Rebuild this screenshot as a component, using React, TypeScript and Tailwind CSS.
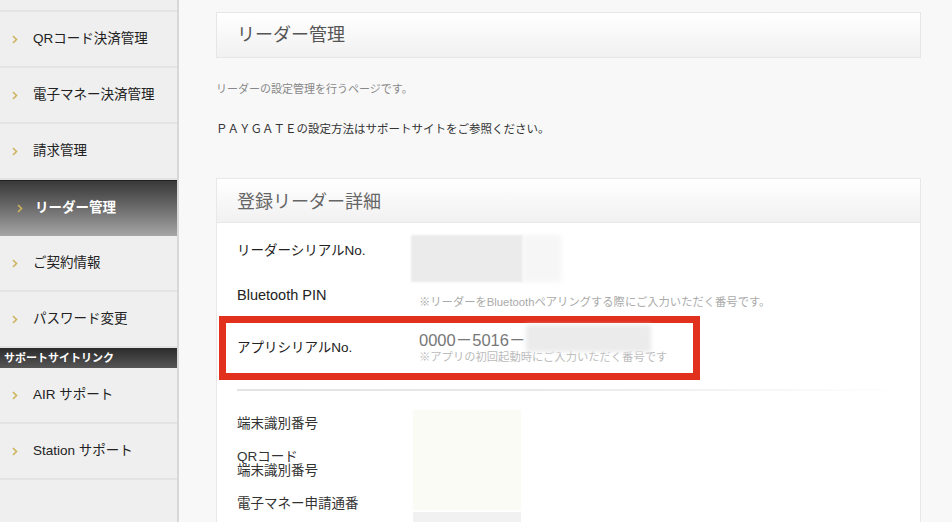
import React from 'react'

const font = { fontFamily: '"Liberation Sans", "Noto Sans CJK JP", sans-serif' }

const Chevron = () => (
  <svg width="6" height="9" viewBox="0 0 6 9" className="shrink-0">
    <path d="M1 1 L4.5 4.5 L1 8" fill="none" stroke="#cdb35c" strokeWidth="1.6" />
  </svg>
)

const NavItem = ({ label, active = false }: { label: string; active?: boolean }) =>
  active ? (
    <div className="h-[56px] flex items-center pl-[17px] gap-[12px] bg-gradient-to-b from-[#393939] to-[#a6a6a6] border-t border-[#222]">
      <Chevron />
      <span className="text-[13.5px] text-white font-bold">{label}</span>
    </div>
  ) : (
    <div className="h-[56px] flex items-center pl-[12px] gap-[15px] border-b-2 border-[#e3e3e3]">
      <Chevron />
      <span className="text-[13.5px] text-[#222]">{label}</span>
    </div>
  )

export default function App() {
  return (
    <div className="flex w-[952px] h-[522px] overflow-hidden bg-[#f8f8f8]" style={font}>
      {/* ── Sidebar ── */}
      <aside className="w-[179px] shrink-0 bg-[#efefef] border-r-2 border-[#d8d8d8] flex flex-col">
        <div className="h-[12px] border-b-2 border-[#e3e3e3]" />
        <NavItem label="QRコード決済管理" />
        <NavItem label="電子マネー決済管理" />
        <NavItem label="請求管理" />
        <NavItem label="リーダー管理" active />
        <NavItem label="ご契約情報" />
        <NavItem label="パスワード変更" />
        <div className="h-[20px] flex items-center pl-[4px] bg-gradient-to-b from-[#2c2c2c] to-[#565656]">
          <span className="text-[11px] text-white font-bold">サポートサイトリンク</span>
        </div>
        <NavItem label="AIR サポート" />
        <NavItem label="Station サポート" />
      </aside>

      {/* ── Main ── */}
      <main className="flex-1 pl-[37px] pr-[31px] pt-[12px]">
        <div className="h-[46px] flex items-center pl-[20px] pt-[1px] border border-[#e6e6e6] bg-gradient-to-b from-white to-[#f1f1f1]">
          <h1 className="text-[18px] text-[#555]">リーダー管理</h1>
        </div>

        <p className="mt-[24px] text-[11px] leading-[15px] text-[#888]">リーダーの設定管理を行うページです。</p>
        <p className="mt-[24px] text-[11.5px] leading-[16px] text-[#333]">ＰＡＹＧＡＴＥの設定方法はサポートサイトをご参照ください。</p>

        <section className="mt-[41px] border border-[#e8e8e8] bg-white">
          <div className="h-[44px] flex items-center pl-[20px] pt-[3px] border-b border-[#e8e8e8] bg-gradient-to-b from-white to-[#f1f1f1]">
            <h2 className="text-[18px] text-[#666]">登録リーダー詳細</h2>
          </div>

          <div className="pl-[20px] pb-[40px]">
            {/* リーダーシリアル */}
            <div className="h-[53px] flex items-start">
              <span className="w-[174px] mt-[19px] text-[13.5px] leading-[18px] text-[#222]">リーダーシリアルNo.</span>
              <div className="mt-[12px] flex">
                <div className="w-[112px] h-[47px] bg-[#ebebeb] blur-[1px]" />
                <div className="w-[38px] h-[47px] bg-[#f6f6f6] blur-[2px]" />
              </div>
            </div>

            {/* Bluetooth PIN */}
            <div className="h-[40px] flex items-start">
              <span className="w-[182px] mt-[10px] text-[14.5px] leading-[18px] text-[#222]">Bluetooth PIN</span>
              <span className="mt-[19px] text-[11.3px] leading-[15px] text-[#aaa]">※リーダーをBluetoothペアリングする際にご入力いただく番号です。</span>
            </div>

            {/* アプリシリアル (highlighted) */}
            <div className="-ml-[18px] w-[481px] h-[64px] border-[7px] border-[#e2301f] flex">
              <span className="w-[193px] pl-[11px] pt-[16px] text-[13.5px] leading-[18px] text-[#222]">アプリシリアルNo.</span>
              <div className="relative pt-[7px]">
                <div className="text-[16.5px] leading-[20px] text-[#777]">0000－5016－</div>
                <div className="text-[11.3px] leading-[14px] text-[#bbb]">※アプリの初回起動時にご入力いただく番号です</div>
                <div className="absolute left-[107px] top-[2px] w-[125px] h-[27px] bg-[#ebebeb] blur-[2px]" />
              </div>
            </div>

            <div className="mt-[9px] w-[669px] h-[2px] bg-gradient-to-r from-[#e3e3e3] via-[#eaeaea] to-transparent" />

            {/* 端末識別番号 etc */}
            <div className="flex">
              <div className="w-[176px] flex flex-col text-[13.5px] text-[#333]">
                <span className="mt-[24px] leading-[18px]">端末識別番号</span>
                <span className="mt-[17px] leading-[14px]">QRコード<br />端末識別番号</span>
                <span className="mt-[17px] leading-[18px]">電子マネー申請通番</span>
              </div>
              <div className="mt-[19px] flex flex-col">
                <div className="w-[108px] h-[100px] bg-[#fbfbf5]" />
                <div className="w-[108px] h-[20px] mt-[2px] bg-[#f1f1f1]" />
              </div>
            </div>
          </div>
        </section>
      </main>
    </div>
  )
}
